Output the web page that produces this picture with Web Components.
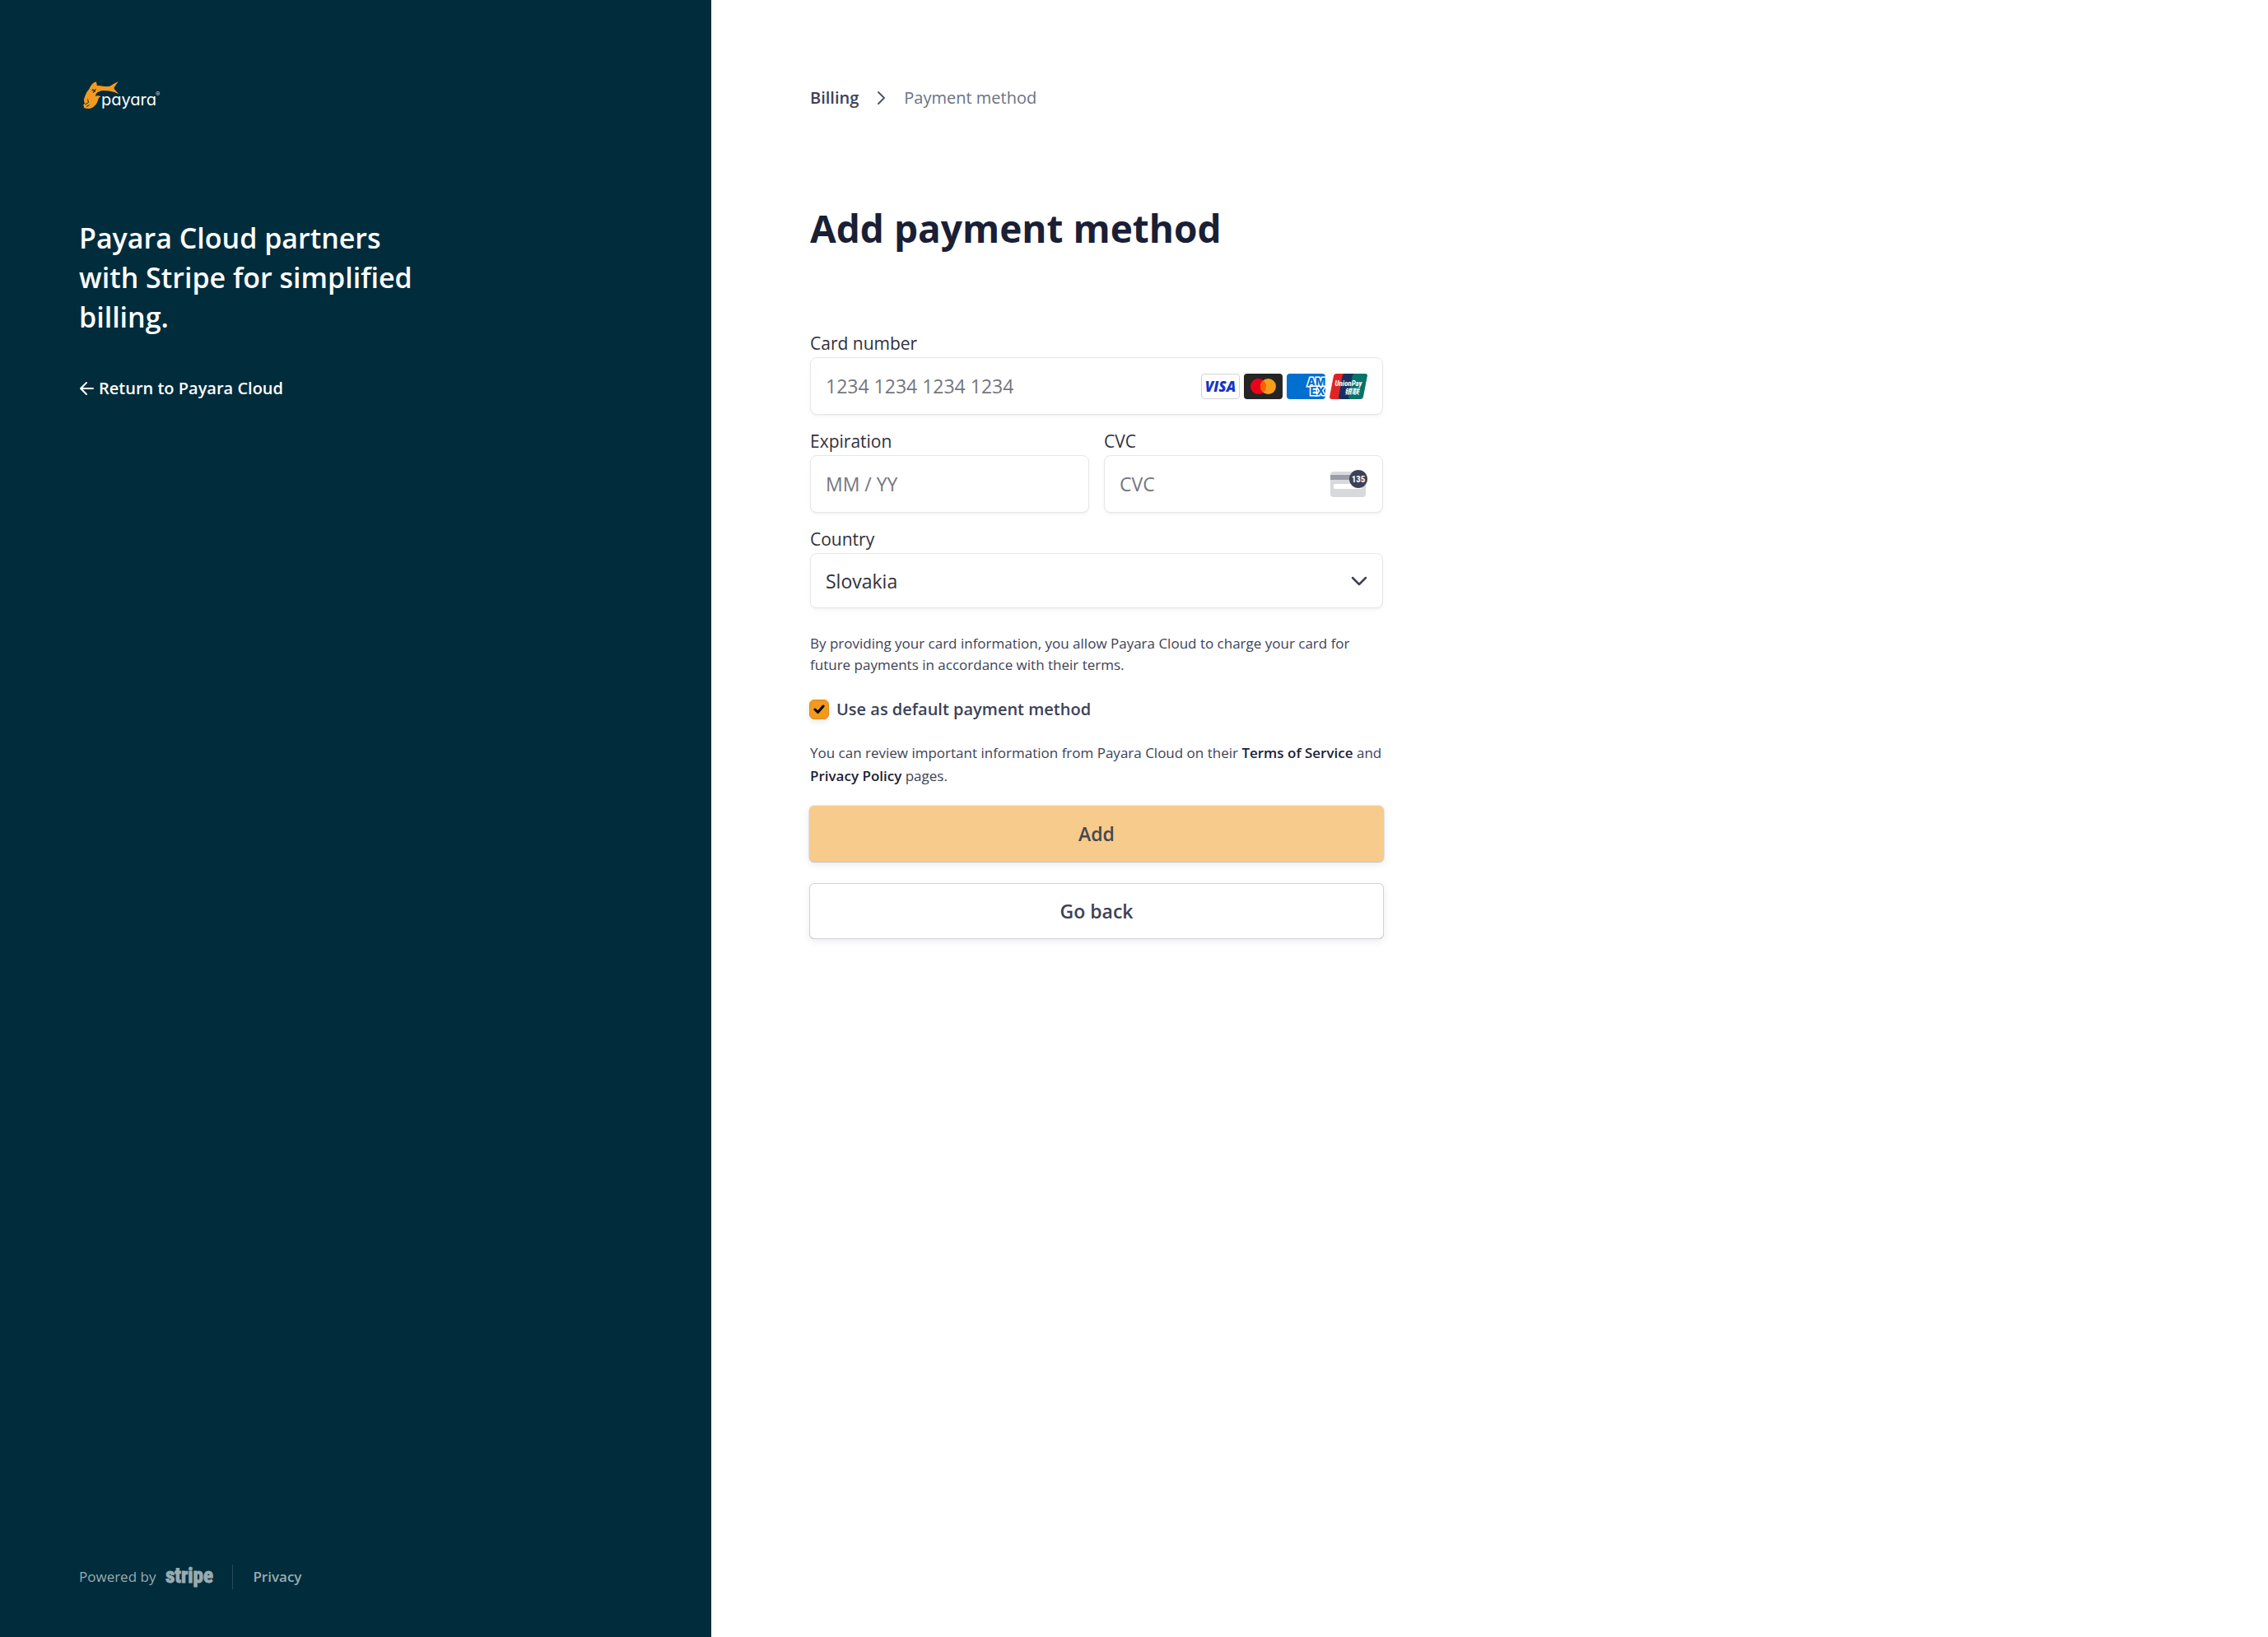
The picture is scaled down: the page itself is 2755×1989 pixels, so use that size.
<!DOCTYPE html>
<html lang="en">
<head>
<meta charset="utf-8">
<title>Add payment method</title>
<style>
  html, body { margin: 0; height: 100%; }
  body { font-family: "Open Sans", "Noto Sans", sans-serif; color: #3c4257; background: #fff; }
</style>
</head>
<body>
<billing-portal></billing-portal>

<script>
const define = (name, html, setup) => {
  const template = document.createElement('template');
  template.innerHTML = '<style>*,*::before,*::after{box-sizing:border-box}</style>' + html;
  customElements.define(name, class extends HTMLElement {
    constructor() {
      super();
      this.attachShadow({ mode: 'open' }).append(template.content.cloneNode(true));
    }
    connectedCallback() { if (setup) setup(this, this.shadowRoot); }
  });
};

define('payara-logo', `
<style>
  :host { display: block; }
  svg { display: block; }
  text { font-family: "Inter", sans-serif; fill: #fff; }
  .word { font-size: 20px; font-feature-settings: "cv11", "ss03"; }
  .reg { font-size: 8px; fill: #c9d3d6; }
</style>
<svg width="104" height="40" viewBox="0 0 104 40" role="img" aria-label="Payara">
  <path fill="#f29a1f" d="M6 35 L5.300 30.700 L7.300 30 Q4.500 27 7.300 20.700 Q9 15.500 12.300 12.300 Q14 8 16.300 5.700 Q18 4 20.700 3.300 Q21.800 5.500 21.700 8 Q26 7.800 29 8.700 Q34 9.500 37.300 8.700 Q40 7 42.300 5.700 L47.700 3 Q45 7 43 9.700 Q42.300 11 42.700 12 L48.300 18.300 Q44 16 39 15 Q35 14 32.300 14.300 Q27 13.500 23.300 15.700 Q20.500 17 19.800 21 Q22.500 19.300 26.700 21.300 Q23.800 22 23.300 24.700 Q22.500 28.500 20.700 30.700 Q18 34.500 14 35.700 Q10 36.500 6 35 Z"/>
  <path fill="none" stroke="#012c3c" stroke-width="1" d="M15.500 14h4.500M16.500 12l3 4M20.500 12l-3.500 5M7.500 31l4-2.500-1-4M9 33.500l3.500-2"/>
  <text class="word" x="27" y="32">payara</text>
  <text class="reg" x="93" y="21">®</text>
</svg>`);

define('stripe-logo', `
<style>
  :host { display: block; }
  svg { display: block; overflow: visible; }
  text { font: 700 25px "Liberation Sans Narrow", "Roboto Condensed", sans-serif; fill: currentColor; stroke: currentColor; stroke-width: 1; }
</style>
<svg width="58" height="26" viewBox="0 0 58 26" role="img" aria-label="Stripe"><text x="0" y="20">stripe</text></svg>`);

define('brand-sidebar', `
<style>
  :host { display: flex; flex-direction: column; background: #012c3c; color: #fff; padding: 96px 96px 58px; }
  h2 { margin: 129px 0 0; max-width: 424px; font-size: 34px; line-height: 48px; font-weight: 600; }
  .back { display: flex; align-items: center; gap: 5px; margin-top: 47px; font-size: 20px; line-height: 32px; font-weight: 600; color: inherit; text-decoration: none; align-self: flex-start; }
  footer { margin-top: auto; display: flex; align-items: center; font-size: 17px; line-height: 30px; color: #99abb1; }
  .powered { display: flex; align-items: center; gap: 12px; padding-right: 23px; border-right: 1px solid #264b59; }
  .privacy { padding-left: 24px; color: inherit; text-decoration: none; font-weight: 600; }
</style>
<payara-logo></payara-logo>
<h2>Payara Cloud partners with Stripe for simplified billing.</h2>
<a class="back" href="#return">
  <svg width="19" height="18" viewBox="0 0 19 18" fill="none" stroke="currentColor" stroke-width="2" stroke-linecap="round" stroke-linejoin="round" aria-hidden="true"><path d="M17 9H2M9 2L2 9l7 7"/></svg>
  <span>Return to Payara Cloud</span>
</a>
<footer>
  <span class="powered"><span>Powered by</span><stripe-logo></stripe-logo></span>
  <a class="privacy" href="#privacy">Privacy</a>
</footer>`);

define('crumb-trail', `
<style>
  :host { display: block; font-size: 20px; line-height: 30px; }
  nav { display: flex; align-items: center; gap: 22px; color: #697386; }
  a { color: #3c4257; font-weight: 600; text-decoration: none; }
</style>
<nav aria-label="Breadcrumb">
  <a href="#billing">Billing</a>
  <svg width="11" height="18" viewBox="0 0 11 18" fill="none" stroke="#4f566b" stroke-width="2" stroke-linecap="round" stroke-linejoin="round" aria-hidden="true"><path d="M2 2l7 7-7 7"/></svg>
  <span>Payment method</span>
</nav>`);

define('card-brands', `
<style>
  :host { display: flex; gap: 5px; }
  svg { display: block; }
  .visa { font: italic 800 17px "Open Sans", sans-serif; fill: #1434cb; }
  .amex { font: 800 13px "Inter", sans-serif; fill: #016fd0; stroke: #fff; stroke-width: 3; stroke-linejoin: miter; paint-order: stroke; }
  .union { font: italic 700 9px "Liberation Sans Narrow", "Roboto Condensed", sans-serif; fill: #fff; }
  .yinlian { font: italic 700 9px "Noto Sans CJK SC", sans-serif; fill: #fff; }
</style>
<svg width="47" height="31" viewBox="0 0 47 31" role="img" aria-label="Visa">
  <rect x=".5" y=".5" width="46" height="30" rx="3.500" fill="#fff" stroke="#d3d3d6"/>
  <text class="visa" x="23.500" y="21.500" text-anchor="middle">VISA</text>
</svg>
<svg width="47" height="31" viewBox="0 0 47 31" role="img" aria-label="Mastercard">
  <rect width="47" height="31" rx="4" fill="#252525"/>
  <circle cx="17.500" cy="15.500" r="9.500" fill="#eb001b"/><circle cx="29.500" cy="15.500" r="9.500" fill="#f79e1b"/>
  <path d="M23.500 8.100a9.500 9.500 0 0 1 0 14.800a9.500 9.500 0 0 1 0-14.800z" fill="#ff5f00"/>
</svg>
<svg width="47" height="31" viewBox="0 0 47 31" role="img" aria-label="American Express">
  <rect width="47" height="31" rx="4" fill="#016fd0"/>
  <text class="amex" x="25" y="15">AM</text>
  <text class="amex" x="28.500" y="25.500">EX</text>
</svg>
<svg width="46" height="31" viewBox="0 0 46 31" role="img" aria-label="UnionPay">
  <path fill="#e02424" d="M8 0h11l-6 31H3q-3.500 0-2.800-3.500L5 2.500Q5.600 0 8 0z"/>
  <path fill="#17305f" d="M18 0h13l-6 31H14q-3.500 0-2.800-3.500l4.500-25Q16.300 0 18 0z"/>
  <path fill="#04736a" d="M31 0h12.500q3 0 2.400 3L41 28q-.6 3-3.500 3H26q-3.500 0-2.800-3.500l4.500-25Q28.300 0 31 0z"/>
  <text class="union" x="23" y="15" text-anchor="middle">UnionPay</text>
  <text class="yinlian" x="18" y="25">银联</text>
</svg>`);

define('cvc-hint', `
<style>
  :host { display: block; }
  svg { display: block; }
  text { font: 700 11px "Liberation Sans Narrow", "Roboto Condensed", sans-serif; }
</style>
<svg width="45" height="34" viewBox="0 0 45 34" aria-hidden="true">
  <rect y="2" width="43" height="31" rx="4" fill="#d8d9dd"/>
  <path d="M0 6h43v6H0z" fill="#999ba7"/>
  <rect x="4" y="17" width="35" height="6" rx="2" fill="#fff"/>
  <circle cx="34" cy="11" r="11" fill="#3c4257"/>
  <text x="34" y="15" text-anchor="middle" fill="#fff">135</text>
</svg>`);

define('text-field', `
<style>
  :host { display: block; flex: 1; min-width: 0; }
  label { display: block; font-size: 21px; line-height: 30px; color: #30313d; padding-bottom: 2px; }
  .box { display: flex; align-items: center; height: 70px; padding: 0 18px; background: #fff; border: 1px solid #e6e6e6; border-radius: 8px; box-shadow: 0 2px 2px rgba(0,0,0,.03), 0 4px 9px rgba(0,0,0,.02); }
  input { flex: 1; min-width: 0; height: 100%; padding: 0; border: 0; outline: 0; background: none; font: inherit; font-size: 23px; color: #30313d; }
  input::placeholder { color: #757680; opacity: 1; }
</style>
<label for="field"></label>
<div class="box"><input id="field" autocomplete="off"><slot></slot></div>`,
(host, root) => {
  root.querySelector('label').textContent = host.getAttribute('label');
  root.querySelector('input').placeholder = host.getAttribute('placeholder');
});

define('country-field', `
<style>
  :host { display: block; }
  label { display: block; font-size: 21px; line-height: 30px; color: #30313d; padding-bottom: 2px; }
  .box { display: grid; align-items: center; height: 67px; background: #fff; border: 1px solid #e6e6e6; border-radius: 8px; box-shadow: 0 2px 2px rgba(0,0,0,.03), 0 4px 9px rgba(0,0,0,.02); }
  .box > * { grid-area: 1 / 1; }
  select { appearance: none; width: 100%; height: 100%; padding: 0 18px; border: 0; outline: 0; background: none; font: inherit; font-size: 23px; color: #30313d; }
  svg { justify-self: end; margin-right: 18px; pointer-events: none; }
</style>
<label for="country">Country</label>
<div class="box">
  <select id="country"><option>Slovakia</option></select>
  <svg width="20" height="12" viewBox="0 0 20 12" fill="none" stroke="#3c4257" stroke-width="2.500" stroke-linecap="round" stroke-linejoin="round" aria-hidden="true"><path d="M2 2l8 8 8-8"/></svg>
</div>`);

define('default-check', `
<style>
  :host { display: block; margin-left: -1px; }
  label { display: flex; align-items: center; gap: 9px; font-size: 20px; line-height: 30px; font-weight: 600; color: #3c4257; }
  .tick { display: grid; flex: none; }
  .tick > * { grid-area: 1 / 1; }
  input { appearance: none; width: 24px; height: 24px; margin: 0; border: 1px solid #d98b1e; border-radius: 6px; background: #f29a1f; box-shadow: 0 3px 6px rgba(60,66,87,.12); }
  svg { place-self: center; pointer-events: none; }
</style>
<label><span class="tick"><input type="checkbox" checked>
<svg width="14" height="12" viewBox="0 0 14 12" fill="none" stroke="#000" stroke-width="3" stroke-linecap="round" stroke-linejoin="round" aria-hidden="true"><path d="M2 6l3.500 3.500L12 2"/></svg></span>
<slot></slot></label>`);

define('action-button', `
<style>
  :host { display: block; margin: 0 -1px; }
  button { display: block; width: 100%; height: 68px; padding: 0; border: 0; border-radius: 6px; font: inherit; font-size: 23px; font-weight: 600; color: #3c4257; background: #fff; box-shadow: inset 0 0 0 1px #d0d2d9, inset 0 -1px 0 #c0c2cc, 0 3px 8px rgba(60,66,87,.1); }
  :host([primary]) button { background: #f7cb8b; color: #45484f; box-shadow: 0 1px 1px rgba(0,0,0,.14), 0 0 0 1px rgba(60,66,87,.08), 0 3px 8px rgba(60,66,87,.12); }
</style>
<button type="button"><slot></slot></button>`);

define('payment-form', `
<style>
  :host { display: block; }
  form { display: flex; flex-direction: column; }
  .fields { display: flex; flex-direction: column; gap: 17px; }
  .pair { display: flex; gap: 18px; }
  p { margin: 0; font-size: 17px; line-height: 28px; color: #3c4257; }
  .terms { margin-top: 30px; line-height: 26px; }
  default-check { margin-top: 26px; margin-bottom: 24px; }
  p a { color: #1a1f36; font-weight: 600; text-decoration: none; }
  .actions { display: flex; flex-direction: column; gap: 26px; margin-top: 22px; }
</style>
<form>
  <div class="fields">
    <text-field label="Card number" placeholder="1234 1234 1234 1234"><card-brands></card-brands></text-field>
    <div class="pair">
      <text-field label="Expiration" placeholder="MM / YY"></text-field>
      <text-field label="CVC" placeholder="CVC"><cvc-hint></cvc-hint></text-field>
    </div>
    <country-field></country-field>
  </div>
  <p class="terms">By providing your card information, you allow Payara Cloud to charge your card for future payments in accordance with their terms.</p>
  <default-check>Use as default payment method</default-check>
  <p>You can review important information from Payara Cloud on their <a href="#terms">Terms of Service</a> and <a href="#privacy">Privacy Policy</a> pages.</p>
  <div class="actions">
    <action-button primary>Add</action-button>
    <action-button>Go back</action-button>
  </div>
</form>`);

define('billing-portal', `
<style>
  :host { display: grid; grid-template-columns: 864px 1fr; min-height: 100%; }
  main { padding: 104px 120px; }
  .column { max-width: 696px; }
  h1 { margin: 108px 0 90px; font-size: 46px; line-height: 70px; font-weight: 700; color: #1a1f36; white-space: nowrap; }
</style>
<brand-sidebar></brand-sidebar>
<main><div class="column">
  <crumb-trail></crumb-trail>
  <h1>Add payment method</h1>
  <payment-form></payment-form>
</div></main>`);
</script>
</body>
</html>
